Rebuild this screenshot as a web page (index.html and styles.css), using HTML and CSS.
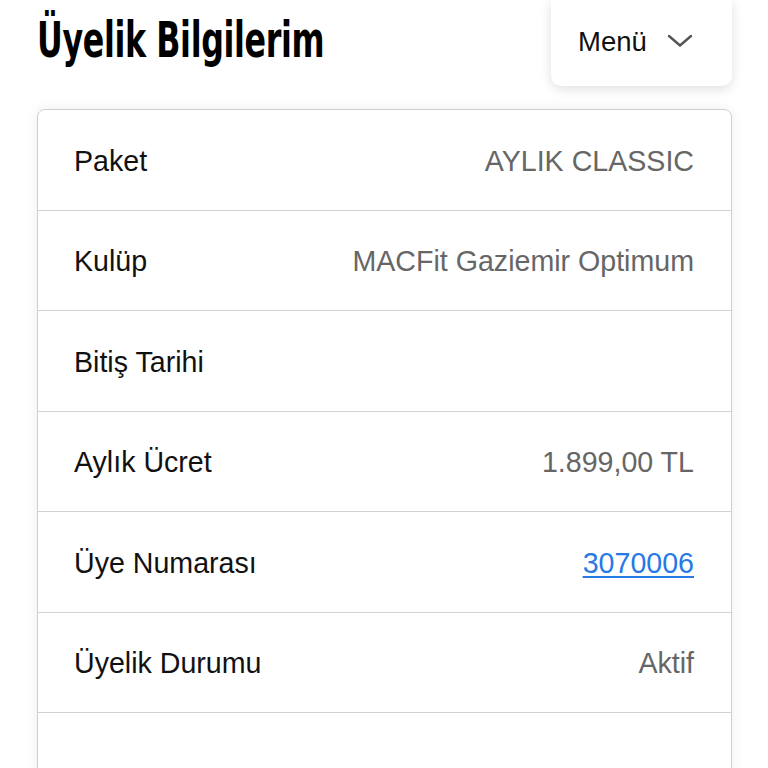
FILE: index.html
```html
<!DOCTYPE html>
<html lang="tr">
<head>
<meta charset="utf-8">
<link rel="stylesheet" href="styles.css">
</head>
<body>
<div class="page">
  <header class="header">
    <h1 class="title">Üyelik Bilgilerim</h1>
    <button class="menu">
      <span>Menü</span>
      <svg class="chev" width="26" height="14" viewBox="0 0 26 14"><path d="M2 2 L13 11.5 L24 2" fill="none" stroke="#555" stroke-width="2.4" stroke-linecap="round" stroke-linejoin="round"/></svg>
    </button>
  </header>
  <section class="card">
    <div class="row"><span class="label">Paket</span><span class="value">AYLIK CLASSIC</span></div>
    <div class="row"><span class="label">Kulüp</span><span class="value">MACFit Gaziemir Optimum</span></div>
    <div class="row"><span class="label">Bitiş Tarihi</span><span class="value"></span></div>
    <div class="row"><span class="label">Aylık Ücret</span><span class="value">1.899,00 TL</span></div>
    <div class="row"><span class="label">Üye Numarası</span><a class="value link" href="#">3070006</a></div>
    <div class="row"><span class="label">Üyelik Durumu</span><span class="value">Aktif</span></div>
    <div class="row"><span class="label"></span><span class="value"></span></div>
  </section>
</div>
</body>
</html>
```
FILE: styles.css
```css
html, body {
  margin: 0;
  padding: 0;
  background: #fff;
  font-family: "Liberation Sans", Arial, sans-serif;
  overflow: hidden;
}
.page {
  padding: 0 36px 0 37px;
}
.header {
  display: flex;
  justify-content: space-between;
  align-items: flex-start;
  height: 109px;
}
.title {
  margin: 0;
  padding-top: 10px;
  font-family: "DejaVu Sans Condensed", "DejaVu Sans", sans-serif;
  font-stretch: condensed;
  font-weight: 700;
  font-size: 50px;
  line-height: 60px;
  letter-spacing: -0.5px;
  color: #000;
  white-space: nowrap;
  transform: scaleX(0.705);
  transform-origin: left top;
}
.menu {
  display: flex;
  align-items: center;
  gap: 20px;
  width: 181px;
  height: 86px;
  padding: 0 0 0 27px;
  border: none;
  border-radius: 0 0 10px 10px;
  background: #fff;
  box-shadow: 0 3px 12px rgba(0,0,0,0.13);
  font-family: "Liberation Sans", Arial, sans-serif;
  font-size: 27.5px;
  color: #111;
  box-sizing: border-box;
}
.menu span { margin-top: -2px; }
.chev { display: block; margin-top: -4px; }
.card {
  border: 1px solid #cfcfcf;
  border-radius: 8px;
  box-shadow: 0 0 14px rgba(0,0,0,0.07);
  background: #fff;
}
.row {
  display: flex;
  justify-content: space-between;
  align-items: center;
  box-sizing: border-box;
  height: 100.5px;
  padding: 3px 37px 0 36px;
  border-bottom: 1px solid #d2d2d2;
  font-size: 28.6px;
}
.label { color: #111; }
.value { color: #666; }
.link { color: #2779e6; text-decoration: underline; text-underline-offset: 3px; text-decoration-thickness: 2px; }
```
